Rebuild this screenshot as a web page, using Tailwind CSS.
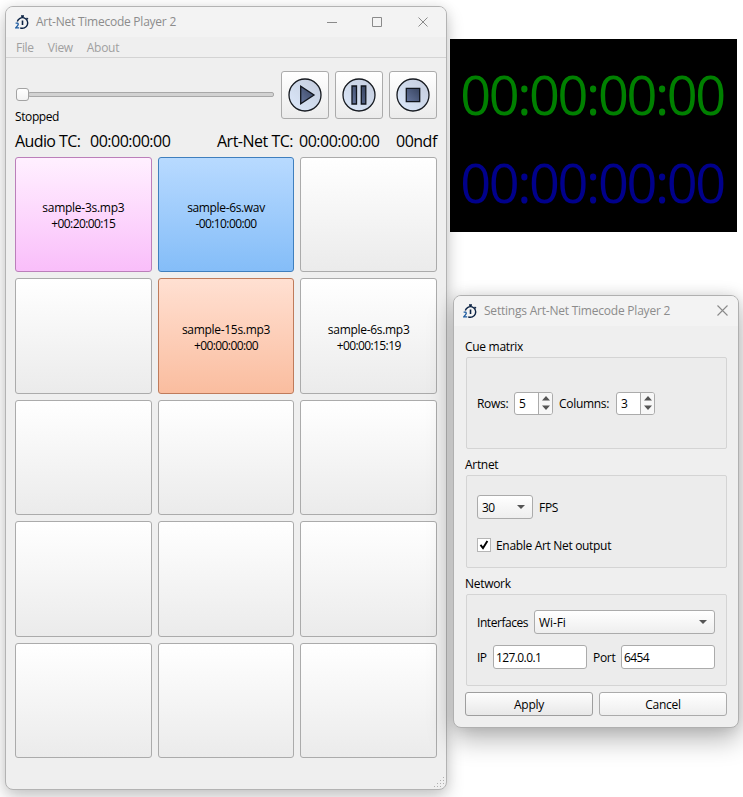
<!DOCTYPE html>
<html lang="en">
<head>
<meta charset="utf-8">
<title>Art-Net Timecode Player 2</title>
<script src="https://cdn.jsdelivr.net/npm/@tailwindcss/browser@4"></script>
</head>
<body class="relative h-[797px] w-[743px] overflow-hidden bg-white font-['Open_Sans','Noto_Sans',sans-serif] text-[12px] leading-4 tracking-[-0.3px] text-black">
<svg class="absolute size-0">
  <symbol id="logo" viewBox="0 0 14 15">
    <path d="M7.500 .5v2.500M6 1h3M11.500 3l1.500 1.300" fill="none" stroke="#0c2344" stroke-width="1.400"/>
    <path d="M2.300 6.500A5.300 5.300 0 1 1 5.200 12.800" fill="none" stroke="#0c2344" stroke-width="1.400"/>
    <path d="M7.500 5.500v4.500" stroke="#0c2344" stroke-width="1.600"/>
    <path d="M.6 8.200h2.200q1 1-.4 2.700L.8 12.900h3.400" fill="none" stroke="#1d5ba0" stroke-width="1.300"/>
  </symbol>
  <symbol id="close" viewBox="0 0 11 11"><path d="M.5.5l10 10M10.500 .5l-10 10" fill="none" stroke="#8a8a8a" stroke-width="1.100"/></symbol>
  <linearGradient id="disc" x1="0" y1="1" x2="1" y2="0"><stop offset="0" stop-color="#dce9fb"/><stop offset="1" stop-color="#c3cbdc"/></linearGradient>
  <linearGradient id="glyph" x1="0" y1="1" x2="1" y2="0"><stop offset="0" stop-color="#65759c"/><stop offset="1" stop-color="#37435f"/></linearGradient>
</svg>

<!-- Player window -->
<section class="absolute left-[5px] top-[6px] flex h-[784px] w-[442px] flex-col rounded-[8px] border border-[#b3b3b3] bg-[#efefef] shadow-[0_8px_18px_rgba(0,0,0,0.2),0_0_12px_rgba(0,0,0,0.08)]">
  <header class="flex h-[30px] items-center rounded-t-[7px] bg-[#f3f3f3] pl-[9px] text-[#8c8c8c]">
    <svg class="h-[15px] w-[14px]"><use href="#logo"/></svg>
    <span class="ml-[7px] tracking-[-0.24px]">Art-Net Timecode Player 2</span>
    <svg class="ml-auto mr-[18px] h-[11px] w-[101px]" fill="none" stroke="#8a8a8a">
      <path d="M0 5.500h10M45.500 .5h9v9h-9zM91.500 .5l9 9M100.500 .5l-9 9"/>
    </svg>
  </header>
  <nav class="flex h-[21px] items-center gap-[14px] border-b border-[#d3d3d3] pl-[10px] pt-[2px] text-[#a0a0a0]">
    <span>File</span><span>View</span><span>About</span>
  </nav>
  <main class="flex flex-col px-[9px] pt-[13px]">
    <div class="flex gap-[7px]">
      <div class="h-12 w-[259px] pl-px pt-[17px]">
        <div class="flex h-[13px] items-center">
          <div class="z-10 h-[13px] w-[13px] rounded-[3px] border border-[#a3a3a3] bg-linear-to-b from-white to-[#f3f3f3]"></div>
          <div class="-ml-[1px] h-[5px] flex-1 rounded-[2px] border border-[#a8a8a8] bg-[#d2d2d2]"></div>
        </div>
        <p class="-ml-px mt-[8px] tracking-[-0.4px]">Stopped</p>
      </div>
      <div class="flex gap-[6px]">
        <button class="flex size-12 items-center justify-center rounded-[3px] border border-[#ababab] bg-linear-to-b from-white to-[#ebebeb]">
          <svg width="34" height="34" viewBox="0 0 34 34"><circle cx="17" cy="17" r="16" fill="url(#disc)" stroke="#161a20" stroke-width="1.300"/><path d="M12.700 8.200v17.600L26 17z" fill="url(#glyph)" stroke="#10141c" stroke-width="1.300"/></svg>
        </button>
        <button class="flex size-12 items-center justify-center rounded-[3px] border border-[#ababab] bg-linear-to-b from-white to-[#ebebeb]">
          <svg width="34" height="34" viewBox="0 0 34 34"><circle cx="17" cy="17" r="16" fill="url(#disc)" stroke="#161a20" stroke-width="1.300"/><path d="M10 8h4.500v18H10zM19.300 8h4.500v18h-4.500z" fill="url(#glyph)" stroke="#10141c" stroke-width="1.300"/></svg>
        </button>
        <button class="flex size-12 items-center justify-center rounded-[3px] border border-[#ababab] bg-linear-to-b from-white to-[#ebebeb]">
          <svg width="34" height="34" viewBox="0 0 34 34"><circle cx="17" cy="17" r="16" fill="url(#disc)" stroke="#161a20" stroke-width="1.300"/><path d="M10.300 10.300h13.400v13.400H10.300z" fill="url(#glyph)" stroke="#10141c" stroke-width="1.300"/></svg>
        </button>
      </div>
    </div>
    <div class="mt-[12px] flex h-5 whitespace-nowrap text-[16px] leading-5 tracking-[-0.5px]">
      <span class="w-[75px] tracking-[-0.6px]">Audio TC:</span><span class="w-[127px]">00:00:00:00</span>
      <span class="w-[82px]">Art-Net TC:</span><span class="w-[97px]">00:00:00:00</span><span>00ndf</span>
    </div>
    <div class="mt-[6px] grid h-[601px] grid-cols-3 grid-rows-5 gap-[6px] text-center *:flex *:flex-col *:items-center *:justify-center *:rounded-[3px] *:border *:pt-[3px]">
      <button class="border-[#bb7fba] bg-linear-to-b from-[#fff0ff] to-[#f9befa]"><span class="tracking-[-0.27px]">sample-3s.mp3</span><span class="tracking-[-0.6px]">+00:20:00:15</span></button>
      <button class="border-[#3f7fbe] bg-linear-to-b from-[#b8daff] to-[#84bdf8]"><span class="tracking-[-0.35px]">sample-6s.wav</span><span class="tracking-[-0.6px]">-00:10:00:00</span></button>
      <button class="border-[#ababab] bg-linear-to-b from-white to-[#ebebeb]"></button>
      <button class="border-[#ababab] bg-linear-to-b from-white to-[#ebebeb]"></button>
      <button class="border-[#bf7b5b] bg-linear-to-b from-[#ffe0d2] to-[#fabd9f]"><span>sample-15s.mp3</span><span class="tracking-[-0.6px]">+00:00:00:00</span></button>
      <button class="border-[#ababab] bg-linear-to-b from-white to-[#ebebeb]"><span>sample-6s.mp3</span><span class="tracking-[-0.6px]">+00:00:15:19</span></button>
      <button class="border-[#ababab] bg-linear-to-b from-white to-[#ebebeb]"></button>
      <button class="border-[#ababab] bg-linear-to-b from-white to-[#ebebeb]"></button>
      <button class="border-[#ababab] bg-linear-to-b from-white to-[#ebebeb]"></button>
      <button class="border-[#ababab] bg-linear-to-b from-white to-[#ebebeb]"></button>
      <button class="border-[#ababab] bg-linear-to-b from-white to-[#ebebeb]"></button>
      <button class="border-[#ababab] bg-linear-to-b from-white to-[#ebebeb]"></button>
      <button class="border-[#ababab] bg-linear-to-b from-white to-[#ebebeb]"></button>
      <button class="border-[#ababab] bg-linear-to-b from-white to-[#ebebeb]"></button>
      <button class="border-[#ababab] bg-linear-to-b from-white to-[#ebebeb]"></button>
    </div>
  </main>
  <svg class="absolute bottom-[1px] right-[1px]" width="11" height="11" fill="#b0b0b0"><path d="M9 0h1v1H9zM6 3h1v1H6zM9 3h1v1H9zM3 6h1v1H3zM6 6h1v1H6zM9 6h1v1H9zM0 9h1v1H0zM3 9h1v1H3zM6 9h1v1H6z"/></svg>
</section>

<!-- Timecode display -->
<section class="absolute left-[450px] top-[39px] flex h-[193px] w-[287px] flex-col items-center bg-black pr-[3px] pt-[11px] text-[54px] leading-[88px] tracking-[-2.35px]">
  <p class="text-[#008000]">00:00:00:00</p>
  <p class="text-[#00008b]">00:00:00:00</p>
</section>

<!-- Settings dialog -->
<section class="absolute left-[453px] top-[295px] flex h-[433px] w-[286px] flex-col rounded-[8px] border border-[#b0b0b0] bg-[#efefef] shadow-[0_12px_26px_rgba(0,0,0,0.28),0_0_14px_rgba(0,0,0,0.12)]">
  <header class="flex h-[30px] items-center rounded-t-[7px] bg-[#f3f3f3] pl-[9px] text-[#8c8c8c]">
    <svg class="h-[15px] w-[14px]"><use href="#logo"/></svg>
    <span class="ml-[7px] tracking-[-0.22px]">Settings Art-Net Timecode Player 2</span>
    <svg class="mb-[2px] ml-auto mr-[10px] size-[11px]"><use href="#close"/></svg>
  </header>
  <main class="flex flex-col px-[11px]">
    <h2 class="mt-[13px] h-[18px]">Cue matrix</h2>
    <div class="ml-px flex h-[92px] items-center rounded-[2px] border border-[#d4d4d4] bg-[#ececec] pl-[10px]">
      <span class="w-[37px] pt-[2px]">Rows:</span>
      <div class="flex h-[23px] w-[39px] overflow-hidden rounded-[3px] border border-[#ababab] bg-white">
        <span class="flex-1 pl-[4px] leading-[22px]">5</span>
        <span class="flex w-[14px] items-center justify-center border-l border-[#ababab] bg-[#f7f7f7]"><svg width="8" height="14" fill="#555"><path d="M0 4.500L4 0l4 4.500zM0 9.500h8L4 14z"/></svg></span>
      </div>
      <span class="ml-[6px] w-[57px] pt-[2px]">Columns:</span>
      <div class="flex h-[23px] w-[39px] overflow-hidden rounded-[3px] border border-[#ababab] bg-white">
        <span class="flex-1 pl-[4px] leading-[22px]">3</span>
        <span class="flex w-[14px] items-center justify-center border-l border-[#ababab] bg-[#f7f7f7]"><svg width="8" height="14" fill="#555"><path d="M0 4.500L4 0l4 4.500zM0 9.500h8L4 14z"/></svg></span>
      </div>
    </div>
    <h2 class="mt-[8px] h-[18px]">Artnet</h2>
    <div class="ml-px flex h-[93px] flex-col rounded-[2px] border border-[#d4d4d4] bg-[#ececec] pl-[10px] pt-[19px]">
      <div class="flex h-6 items-center">
        <div class="mr-[6px] flex h-6 w-[56px] items-center rounded-[3px] border border-[#ababab] bg-linear-to-b from-white to-[#eee] pl-[4px] pr-[7px]"><span class="pt-[2px] tracking-[-0.6px]">30</span><svg class="ml-auto" width="8" height="4" fill="#555"><path d="M0 0h8L4 4z"/></svg></div>
        <span class="pt-[2px]">FPS</span>
      </div>
      <label class="mt-[18px] flex h-4 items-center gap-[5px]">
        <span class="flex size-[14px] items-center justify-center border border-[#b5b5b5] bg-white"><svg width="10" height="10" fill="none" stroke="#000" stroke-width="1.900"><path d="M1.500 4.800L4 8 8.400.9"/></svg></span>
        <span class="pt-[2px] tracking-[-0.32px]">Enable Art Net output</span>
      </label>
    </div>
    <h2 class="mt-[8px] h-[18px]">Network</h2>
    <div class="ml-px flex h-[92px] flex-col gap-[11px] rounded-[2px] border border-[#d4d4d4] bg-[#ececec] pl-[10px] pr-[11px] pt-[15px]">
      <div class="flex h-6 items-center">
        <span class="w-[57px] pt-[2px] tracking-[-0.45px]">Interfaces</span>
        <div class="flex h-6 flex-1 items-center rounded-[3px] border border-[#ababab] bg-linear-to-b from-white to-[#eee] pl-[4px] pr-[7px]"><span class="pt-[2px] tracking-[-0.1px]">Wi-Fi</span><svg class="ml-auto" width="8" height="4" fill="#555"><path d="M0 0h8L4 4z"/></svg></div>
      </div>
      <div class="flex h-6 items-center tracking-[-0.6px]">
        <span class="w-[16px] pt-[2px]">IP</span>
        <span class="h-6 w-[94px] rounded-[3px] border border-[#ababab] bg-white pl-[2px] leading-[24px]">127.0.0.1</span>
        <span class="ml-[6px] w-[28px] pt-[2px] tracking-[-0.3px]">Port</span>
        <span class="h-6 w-[94px] rounded-[3px] border border-[#ababab] bg-white pl-[2px] leading-[24px]">6454</span>
      </div>
    </div>
    <div class="mt-[6px] grid grid-cols-2 gap-[6px]">
      <button class="h-6 rounded-[3px] border border-[#9e9e9e] bg-linear-to-b from-[#fdfdfd] to-[#e8e8e8] pt-[2px]">Apply</button>
      <button class="h-6 rounded-[3px] border border-[#ababab] bg-linear-to-b from-white to-[#eee] pt-[2px]">Cancel</button>
    </div>
  </main>
</section>
</body>
</html>
